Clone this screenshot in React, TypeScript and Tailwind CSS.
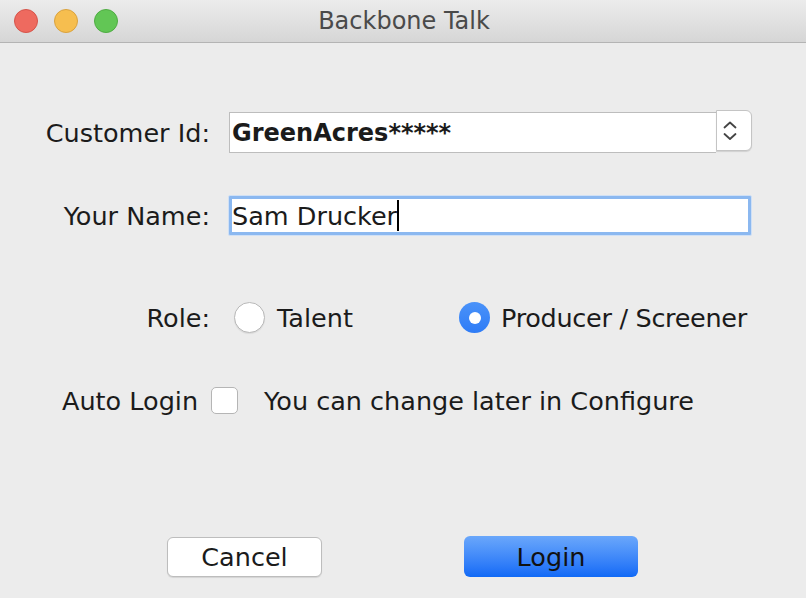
import { useState } from 'react';

const body = { fontFamily: '"DejaVu Sans", "Noto Sans", sans-serif' };

function TrafficLight({ fill, ring }: { fill: string; ring: string }) {
  return <span className={`h-[24px] w-[24px] rounded-full border ${fill} ${ring}`} />;
}

function Radio({ checked, onClick }: { checked: boolean; onClick: () => void }) {
  if (checked) {
    return (
      <button
        onClick={onClick}
        className="flex h-[31px] w-[31px] shrink-0 items-center justify-center rounded-full bg-gradient-to-b from-[#4a92f9] to-[#2e7cf6]"
      >
        <span className="h-[12px] w-[12px] rounded-full bg-white" />
      </button>
    );
  }
  return (
    <button
      onClick={onClick}
      className="h-[31px] w-[31px] shrink-0 rounded-full border border-[#b8b8b8] bg-white shadow-[0_1px_1px_rgba(0,0,0,0.08)]"
    />
  );
}

export default function App() {
  const [role, setRole] = useState<'talent' | 'producer'>('producer');
  const [autoLogin, setAutoLogin] = useState(false);

  return (
    <div
      className="flex h-[598px] w-[806px] flex-col overflow-hidden whitespace-nowrap bg-[#ececec] text-[25.5px] leading-[30px] text-[#1b1b1b]"
      style={body}
    >
      {/* title bar */}
      <div className="relative flex h-[43px] shrink-0 items-center border-b border-[#b4b4b4] bg-gradient-to-b from-[#ececec] to-[#d6d6d6]">
        <div className="absolute left-[14px] top-[9px] flex gap-[16px]">
          <TrafficLight fill="bg-[#ee6a5f]" ring="border-[#d5544a]" />
          <TrafficLight fill="bg-[#f6be4f]" ring="border-[#d9a23f]" />
          <TrafficLight fill="bg-[#62c655]" ring="border-[#4fac43]" />
        </div>
        <div className="w-full pl-[2px] text-center text-[24px] text-[#4a4a4a]">Backbone Talk</div>
      </div>

      {/* form */}
      <div className="grid grid-cols-[210px_524px] items-center gap-x-[18px] pt-[69px]">
        <div className="text-right">Customer Id:</div>
        <div className="flex h-[41px] items-stretch pl-px">
          <div className="flex flex-1 items-center border-y border-l border-[#bdbdbd] bg-white pl-[2px] text-[24px] font-bold">
            GreenAcres*****
          </div>
          <div className="-mt-[2px] mb-[2px] flex w-[36px] items-center justify-center rounded-r-[6px] border border-[#c4c4c4] bg-white pr-[8px] shadow-[0_1px_1px_rgba(0,0,0,0.12)]">
            <svg width="14" height="20" viewBox="0 0 14 20" fill="none" stroke="#444" strokeWidth="1.8" strokeLinecap="round" strokeLinejoin="round">
              <path d="M1.5 6.5 L7 1.5 L12.5 6.5" />
              <path d="M1.5 13 L7 18 L12.5 13" />
            </svg>
          </div>
        </div>

        <div className="mt-[42px] text-right">Your Name:</div>
        <div className="mt-[42px] h-[41px] rounded-[2px] border border-[#cfe0f6] bg-[#8bb8f0] p-[3px]">
          <div className="flex h-full items-center bg-white">
            Sam Drucker
            <span className="h-[31px] w-[2px] bg-black" />
          </div>
        </div>

        <div className="mt-[66px] text-right">Role:</div>
        <div className="mt-[66px] flex h-[31px] items-center">
          <div className="flex w-[231px] shrink-0 items-center gap-[12px] pl-[6px]">
            <Radio checked={role === 'talent'} onClick={() => setRole('talent')} />
            <span>Talent</span>
          </div>
          <div className="flex shrink-0 items-center gap-[11px]">
            <Radio checked={role === 'producer'} onClick={() => setRole('producer')} />
            <span className="tracking-[-0.3px]">Producer / Screener</span>
          </div>
        </div>
      </div>

      <div className="mt-[54px] flex h-[27px] items-center pl-[62px]">
        <span>Auto Login</span>
        <button
          onClick={() => setAutoLogin(!autoLogin)}
          className="ml-[13px] flex h-[27px] w-[27px] items-center justify-center rounded-[5px] border border-[#b5b5b5] bg-white text-[18px] leading-none text-[#333]"
        >
          {autoLogin ? '✓' : ''}
        </button>
        <span className="ml-[26px]">You can change later in Configure</span>
      </div>

      <div className="mt-[122px] flex items-center">
        <button className="ml-[167px] h-[40px] w-[155px] rounded-[6px] border border-[#bdbdbd] bg-white shadow-[0_1px_1px_rgba(0,0,0,0.1)]">
          Cancel
        </button>
        <button className="ml-[142px] h-[41px] w-[174px] rounded-[6px] bg-gradient-to-b from-[#6aa7fb] to-[#0f69f6] text-[#111]">
          Login
        </button>
      </div>
    </div>
  );
}
